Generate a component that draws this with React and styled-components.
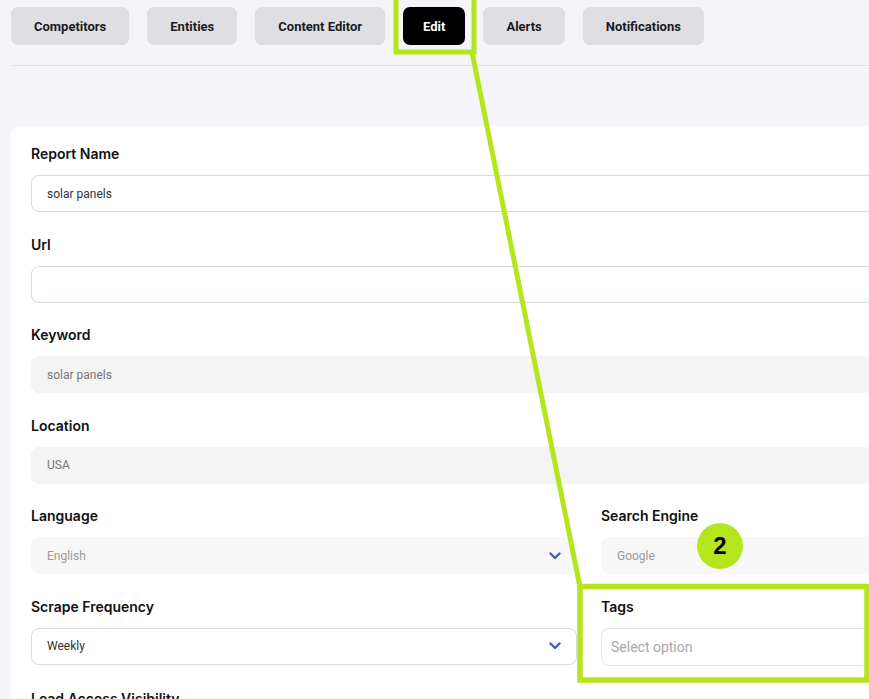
import styled, { createGlobalStyle } from "styled-components";

const GlobalStyle = createGlobalStyle`
  html, body {
    margin: 0;
    padding: 0;
    background: #f5f5f9;
    overflow: hidden;
    font-family: Inter, "Noto Sans", "Liberation Sans", sans-serif;
  }
`;

const Page = styled.div`
  position: relative;
  width: 1180px;
  height: 699px;
  padding: 7px 0 0 11px;
  box-sizing: border-box;
`;

const Tabs = styled.div`
  display: flex;
  gap: 18px;
`;

const Tab = styled.div`
  height: 38px;
  padding: 0 ${(p) => (p.$active ? "20px" : "23px")};
  display: flex;
  align-items: center;
  border-radius: 7px;
  font-family: Roboto, "Liberation Sans", sans-serif;
  font-size: 13px;
  font-weight: 700;
  background: ${(p) => (p.$active ? "#000" : "#dfdfe3")};
  color: ${(p) => (p.$active ? "#fff" : "#1b1b1f")};
`;

const Divider = styled.div`
  height: 1px;
  background: #e3e3e8;
  margin-top: 20px;
`;

const Card = styled.div`
  margin-top: 60px;
  width: 1156px;
  background: #fff;
  border-radius: 8px;
  padding: 18px 20px 20px;
  box-sizing: border-box;
  display: grid;
  grid-template-columns: 546px 546px;
  column-gap: 24px;
  row-gap: 22.6px;
`;

const Field = styled.div`
  grid-column: ${(p) => (p.$full ? "1 / -1" : "auto")};
  display: flex;
  flex-direction: column;
`;

const Label = styled.div`
  font-size: 14px;
  font-weight: 600;
  line-height: 20px;
  color: #111;
  margin-bottom: 11px;
`;

const Input = styled.div`
  position: relative;
  height: ${(p) => (p.$tight ? "38px" : "37px")};
  box-sizing: border-box;
  border-radius: 8px;
  display: flex;
  align-items: center;
  padding-left: ${(p) => (p.$tight ? "9px" : "15px")};
  font-family: Roboto, "Liberation Sans", sans-serif;
  font-size: ${(p) => (p.$tight ? "14px" : "12px")};
  border: 1px solid ${(p) => p.$border || "transparent"};
  background: ${(p) => p.$bg || "#fff"};
  color: ${(p) => p.$color || "#333"};
`;

const Chevron = styled.svg`
  position: absolute;
  right: 15px;
  top: 50%;
  margin-top: -4px;
`;

const Overlay = styled.svg`
  position: absolute;
  left: 0;
  top: 0;
  pointer-events: none;
`;

const Badge = styled.div`
  position: absolute;
  left: 697px;
  top: 523px;
  width: 46px;
  height: 46px;
  border-radius: 50%;
  background: #b5e51d;
  color: #000;
  display: flex;
  align-items: center;
  justify-content: center;
  font-family: "Liberation Sans", Arial, sans-serif;
  font-weight: 700;
  font-size: 24px;
`;

const Down = () => (
  <Chevron width="12" height="8" viewBox="0 0 12 8">
    <path d="M1.5 1.5 L6 6 L10.5 1.5" fill="none" stroke="#4858c4" strokeWidth="2.4" strokeLinecap="round" strokeLinejoin="round" />
  </Chevron>
);

const tabs = ["Competitors", "Entities", "Content Editor", "Edit", "Alerts", "Notifications"];

export default function App() {
  return (
    <>
      <GlobalStyle />
      <Page>
        <Tabs>
          {tabs.map((t) => (
            <Tab key={t} $active={t === "Edit"}>{t}</Tab>
          ))}
        </Tabs>
        <Divider />
        <Card>
          <Field $full>
            <Label>Report Name</Label>
            <Input $border="#cfdcd8">solar panels</Input>
          </Field>
          <Field $full>
            <Label>Url</Label>
            <Input $border="#cfdcd8" />
          </Field>
          <Field $full>
            <Label>Keyword</Label>
            <Input $bg="#f4f4f5" $color="#777">solar panels</Input>
          </Field>
          <Field $full>
            <Label>Location</Label>
            <Input $bg="#f4f4f5" $color="#777">USA</Input>
          </Field>
          <Field>
            <Label>Language</Label>
            <Input $bg="#f7f7f7" $color="#9a9a9a">English<Down /></Input>
          </Field>
          <Field>
            <Label>Search Engine</Label>
            <Input $bg="#f7f7f7" $color="#9a9a9a">Google</Input>
          </Field>
          <Field>
            <Label>Scrape Frequency</Label>
            <Input $border="#dcdcdc" $color="#333">Weekly<Down /></Input>
          </Field>
          <Field>
            <Label>Tags</Label>
            <Input $border="#e2e2e2" $color="#a8a8a8" $tight>Select option</Input>
          </Field>
          <Field>
            <Label>Lead Access Visibility</Label>
          </Field>
        </Card>
        <Overlay width="869" height="699" viewBox="0 0 869 699">
          <rect x="396" y="-5" width="78" height="57" fill="none" stroke="#b5e51d" strokeWidth="5" />
          <line x1="472" y1="52" x2="580" y2="587" stroke="#b5e51d" strokeWidth="5" />
          <rect x="580" y="586.5" width="287" height="93.5" fill="none" stroke="#b5e51d" strokeWidth="5.5" />
        </Overlay>
        <Badge>2</Badge>
      </Page>
    </>
  );
}
